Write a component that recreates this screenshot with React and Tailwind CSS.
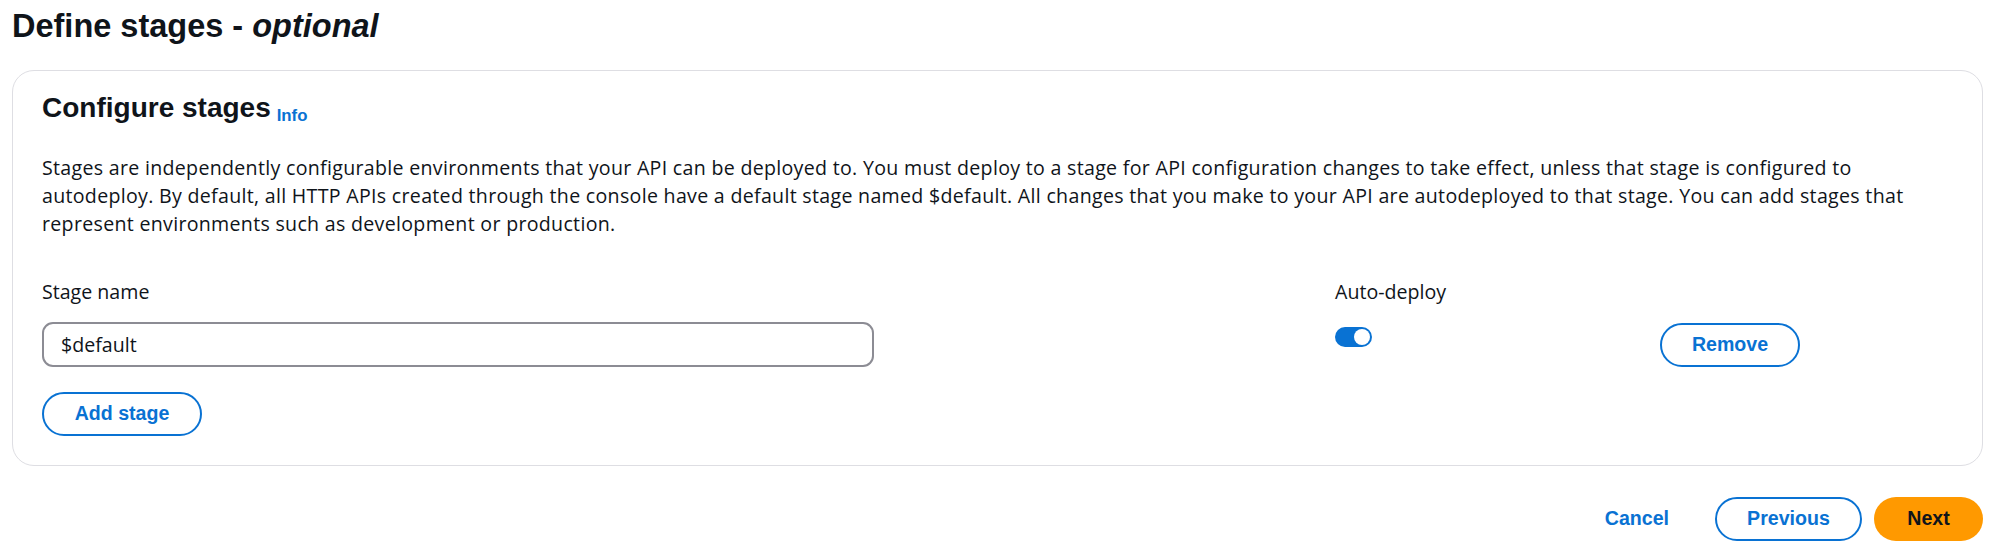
import React from "react";

const font = { fontFamily: '"Liberation Sans", Arial, sans-serif' };
// regular body copy runs a bit wider than Arial in the reference
const body = { fontFamily: '"Open Sans", "Liberation Sans", sans-serif' };

const OutlineButton = ({ children, className = "" }) => (
  <button
    className={`h-[44px] rounded-full border-2 border-[#0972d3] bg-white text-[19.6px] font-bold text-[#0972d3] flex items-center justify-center ${className}`}
  >
    {children}
  </button>
);

const Toggle = () => (
  <div className="w-[37px] h-[20px] rounded-full bg-[#0972d3] flex items-center justify-end pr-[2px]">
    <div className="w-[16px] h-[16px] rounded-full bg-white"></div>
  </div>
);

export default function App() {
  return (
    <div
      className="w-full bg-white pl-3 pr-4 pt-[6px] pb-4 text-[#0f141a]"
      style={font}
    >
      <h1 className="text-[32.5px] leading-[40px] font-bold">
        Define stages - <i>optional</i>
      </h1>

      {/* stages container */}
      <div className="mt-[24px] rounded-[22px] border border-[#dedee3] bg-white px-[29px] pt-[19px] pb-[29px]">
        <div className="flex items-baseline">
          <h2 className="text-[28px] leading-[36px] font-bold">
            Configure stages
          </h2>
          <span className="ml-[6px] relative top-[4px] text-[16.8px] font-bold text-[#0972d3]">
            Info
          </span>
        </div>

        <p
          className="mt-[28px] text-[19.6px] leading-[28px] tracking-[0.3px]"
          style={body}
        >
          Stages are independently configurable environments that your API can
          be deployed to. You must deploy to a stage for API configuration
          changes to take effect, unless that stage is configured to
          autodeploy. By default, all HTTP APIs created through the console
          have a default stage named $default. All changes that you make to
          your API are autodeployed to that stage. You can add stages that
          represent environments such as development or production.
        </p>

        <div className="mt-[40px] flex items-start" style={body}>
          <div className="w-[1293px]">
            <div className="text-[19.6px] leading-[28px]">Stage name</div>
            <div className="mt-[16px] w-[832px] h-[45px] rounded-[11px] border-2 border-[#8c8c94] flex items-center px-[17px] text-[19.6px]">
              $default
            </div>
          </div>
          <div className="w-[325px]">
            <div className="text-[19.6px] leading-[28px]">Auto-deploy</div>
            <div className="mt-[21px]">
              <Toggle />
            </div>
          </div>
          <div className="pt-[45px]" style={font}>
            <OutlineButton className="w-[140px]">Remove</OutlineButton>
          </div>
        </div>

        <OutlineButton className="mt-[25px] w-[160px]">Add stage</OutlineButton>
      </div>

      {/* footer actions */}
      <div className="mt-[31px] flex items-center justify-end">
        <span className="text-[19.6px] font-bold text-[#0972d3]">Cancel</span>
        <OutlineButton className="ml-[46px] w-[147px]">Previous</OutlineButton>
        <button className="ml-[12px] h-[44px] w-[109px] rounded-full bg-[#ff9900] text-[19.6px] font-bold text-[#0f141a]">
          Next
        </button>
      </div>
    </div>
  );
}
